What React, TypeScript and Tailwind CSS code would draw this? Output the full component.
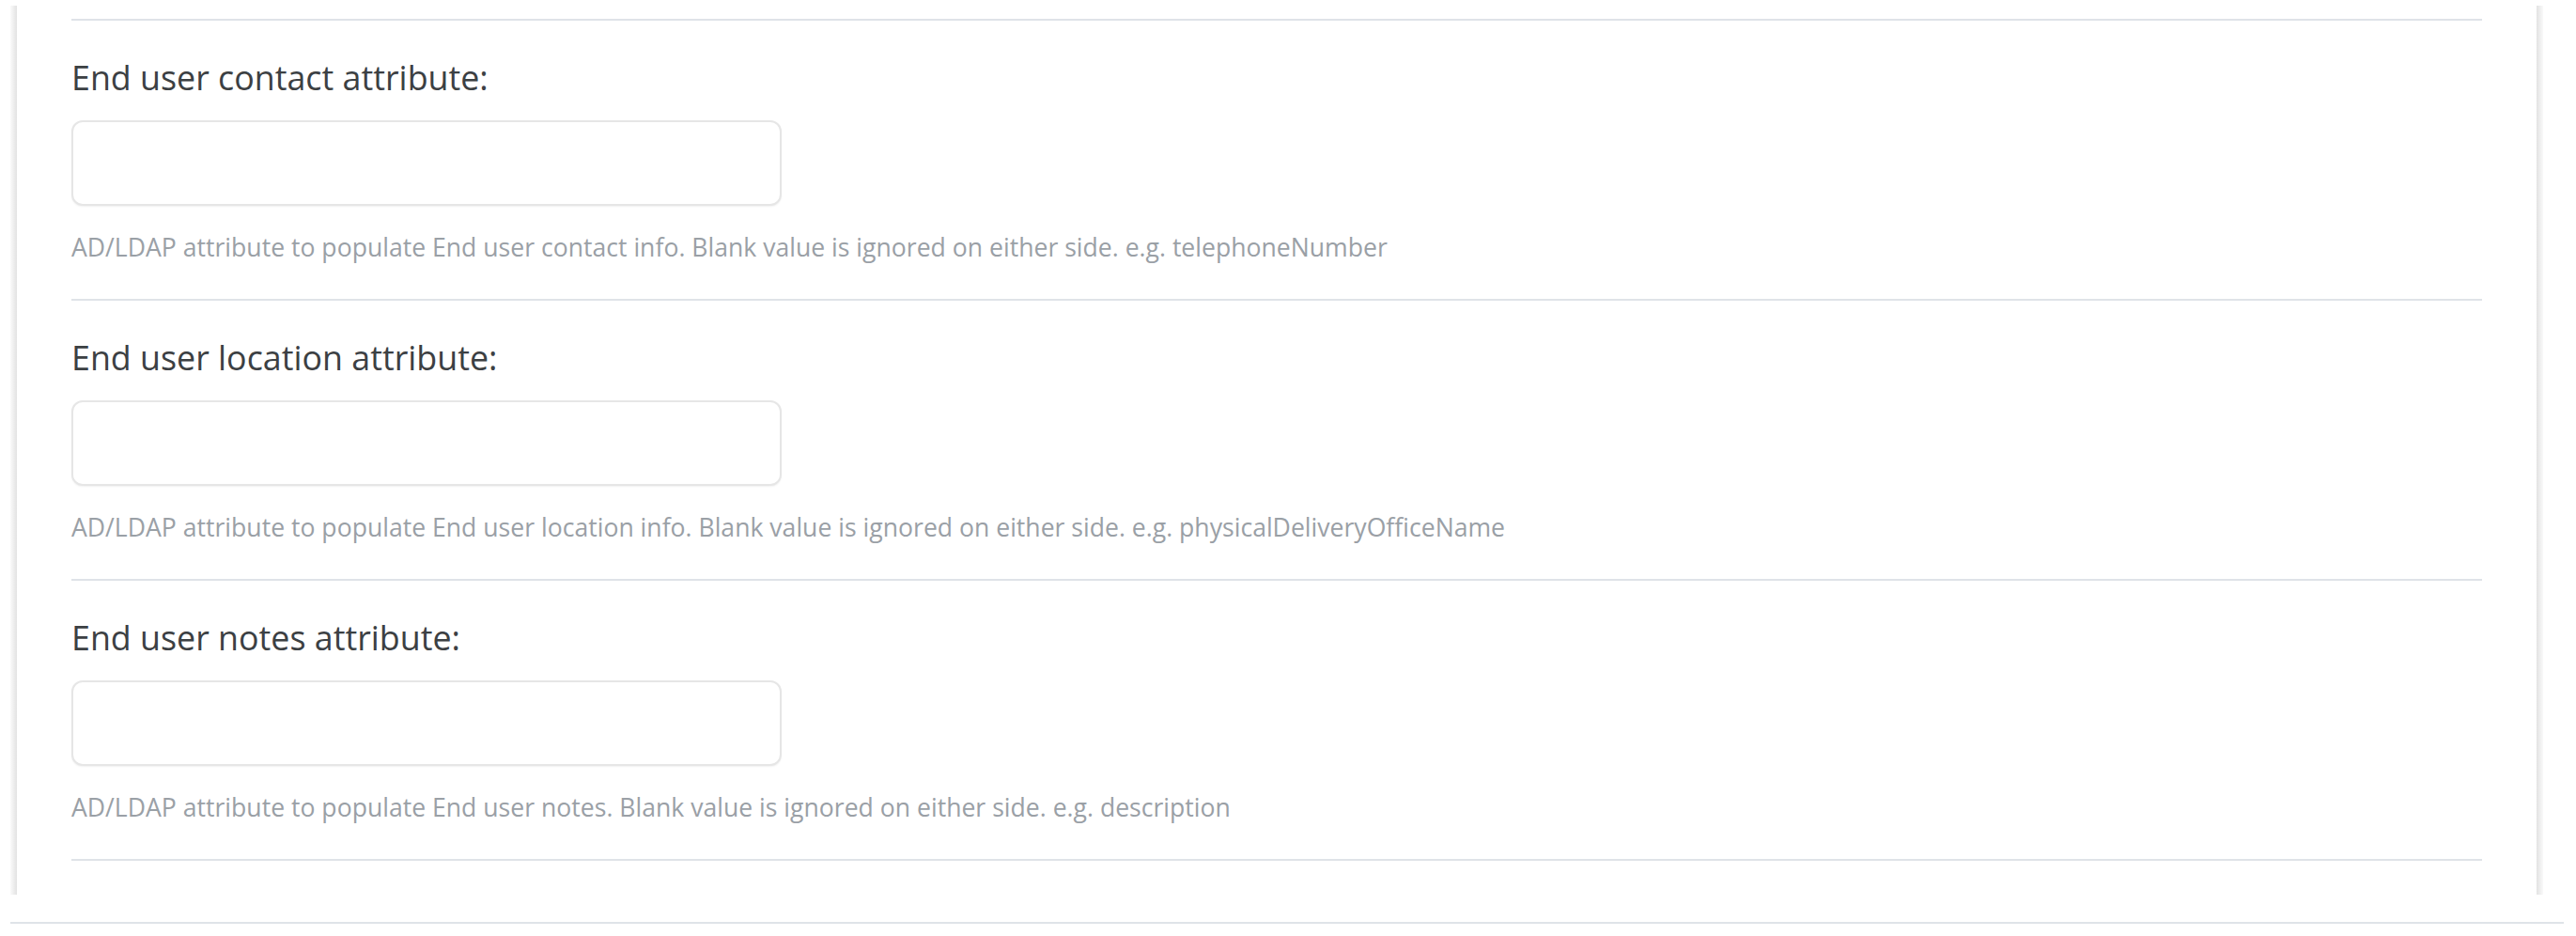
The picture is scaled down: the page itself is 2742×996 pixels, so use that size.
const fields = [
  {
    label: 'End user contact attribute:',
    help: 'AD/LDAP attribute to populate End user contact info. Blank value is ignored on either side. e.g. telephoneNumber',
  },
  {
    label: 'End user location attribute:',
    help: 'AD/LDAP attribute to populate End user location info. Blank value is ignored on either side. e.g. physicalDeliveryOfficeName',
  },
  {
    label: 'End user notes attribute:',
    help: 'AD/LDAP attribute to populate End user notes. Blank value is ignored on either side. e.g. description',
  },
];

function Field({ label, help }: { label: string; help: string }) {
  return (
    <div className="pt-[40px] pb-[40px] border-b-2 border-[#dfe3e8]">
      <label className="block text-[35.8px] leading-[40px] text-[#3c4043]">{label}</label>
      <input
        type="text"
        className="mt-[26px] block w-[756px] h-[91px] rounded-[12px] border-2 border-[#e6e6e6] bg-white px-4 text-[28px] outline-none shadow-[0_1px_2px_rgba(0,0,0,0.06)]"
      />
      <p className="mt-[29px] text-[26.6px] leading-[30px] text-[#9aa0a6]">{help}</p>
    </div>
  );
}

export default function App() {
  return (
    <div className="min-h-screen bg-white pt-[6px] pl-[11px] pr-[13px]" style={{ fontFamily: '"Open Sans", Roboto, sans-serif' }}>
      <div className="flex mr-[22px]">
        <div className="w-[7px] shrink-0 bg-gradient-to-r from-[#fafafa] to-[#e2e2e2]" />
        <div className="flex-1 px-[58px] pt-[14px] pb-[36px]">
          <div className="border-t-2 border-[#dfe3e8]">
            {fields.map(f => (
              <Field key={f.label} label={f.label} help={f.help} />
            ))}
          </div>
        </div>
        <div className="w-[7px] shrink-0 bg-gradient-to-r from-[#e2e2e2] to-[#fafafa]" />
      </div>
      <div className="mt-[29px] h-[2px] bg-[#dfe3e8]" />
    </div>
  );
}
